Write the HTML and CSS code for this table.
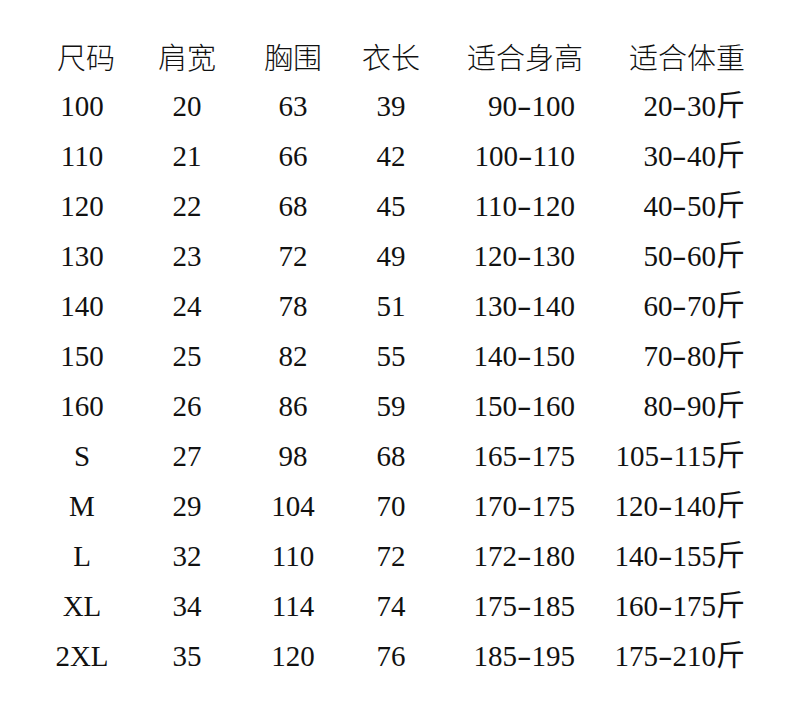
FILE: index.html
```html
<!DOCTYPE html>
<html lang="zh">
<head>
<meta charset="utf-8">
<link rel="stylesheet" href="styles.css">
</head>
<body>
<div class="chart">
  <div class="row head">
    <div class="c1">尺码</div><div class="c2">肩宽</div><div class="c3">胸围</div><div class="c4">衣长</div><div class="c5">适合身高</div><div class="c6">适合体重</div>
  </div>
  <div class="row"><div class="c1">100</div><div class="c2">20</div><div class="c3">63</div><div class="c4">39</div><div class="c5">90<span class="d">-</span>100</div><div class="c6">20<span class="d">-</span>30斤</div></div>
  <div class="row"><div class="c1">110</div><div class="c2">21</div><div class="c3">66</div><div class="c4">42</div><div class="c5">100<span class="d">-</span>110</div><div class="c6">30<span class="d">-</span>40斤</div></div>
  <div class="row"><div class="c1">120</div><div class="c2">22</div><div class="c3">68</div><div class="c4">45</div><div class="c5">110<span class="d">-</span>120</div><div class="c6">40<span class="d">-</span>50斤</div></div>
  <div class="row"><div class="c1">130</div><div class="c2">23</div><div class="c3">72</div><div class="c4">49</div><div class="c5">120<span class="d">-</span>130</div><div class="c6">50<span class="d">-</span>60斤</div></div>
  <div class="row"><div class="c1">140</div><div class="c2">24</div><div class="c3">78</div><div class="c4">51</div><div class="c5">130<span class="d">-</span>140</div><div class="c6">60<span class="d">-</span>70斤</div></div>
  <div class="row"><div class="c1">150</div><div class="c2">25</div><div class="c3">82</div><div class="c4">55</div><div class="c5">140<span class="d">-</span>150</div><div class="c6">70<span class="d">-</span>80斤</div></div>
  <div class="row"><div class="c1">160</div><div class="c2">26</div><div class="c3">86</div><div class="c4">59</div><div class="c5">150<span class="d">-</span>160</div><div class="c6">80<span class="d">-</span>90斤</div></div>
  <div class="row"><div class="c1">S</div><div class="c2">27</div><div class="c3">98</div><div class="c4">68</div><div class="c5">165<span class="d">-</span>175</div><div class="c6">105<span class="d">-</span>115斤</div></div>
  <div class="row"><div class="c1">M</div><div class="c2">29</div><div class="c3">104</div><div class="c4">70</div><div class="c5">170<span class="d">-</span>175</div><div class="c6">120<span class="d">-</span>140斤</div></div>
  <div class="row"><div class="c1">L</div><div class="c2">32</div><div class="c3">110</div><div class="c4">72</div><div class="c5">172<span class="d">-</span>180</div><div class="c6">140<span class="d">-</span>155斤</div></div>
  <div class="row"><div class="c1">XL</div><div class="c2">34</div><div class="c3">114</div><div class="c4">74</div><div class="c5">175<span class="d">-</span>185</div><div class="c6">160<span class="d">-</span>175斤</div></div>
  <div class="row"><div class="c1">2XL</div><div class="c2">35</div><div class="c3">120</div><div class="c4">76</div><div class="c5">185<span class="d">-</span>195</div><div class="c6">175<span class="d">-</span>210斤</div></div>
</div>
</body>
</html>
```
FILE: styles.css
```css
html, body {
  margin: 0;
  padding: 0;
  background: #ffffff;
}
.chart {
  padding: 31px 0 0 42px;
  color: #111111;
  font-family: "Liberation Serif", "Noto Sans CJK SC", serif;
  font-size: 29px;
}
.row {
  display: grid;
  grid-template-columns: 80px 130px 82px 114px 135px 162px;
  height: 50px;
  line-height: 50px;
  white-space: nowrap;
}
.row > div {
  height: 50px;
}
.c1, .c2, .c3, .c4 {
  text-align: center;
}
.c5, .c6 {
  text-align: right;
}
.c5 {
  padding-right: 8px;
}
.head .c1 {
  padding-left: 8px;
}
.head .c5 {
  padding-right: 0;
}
.head > div {
  font-family: "Noto Sans CJK SC", sans-serif;
  font-weight: 300;
}
.d {
  display: inline-block;
  width: 0.5em;
  text-align: center;
  transform: scaleX(1.5);
}
```
